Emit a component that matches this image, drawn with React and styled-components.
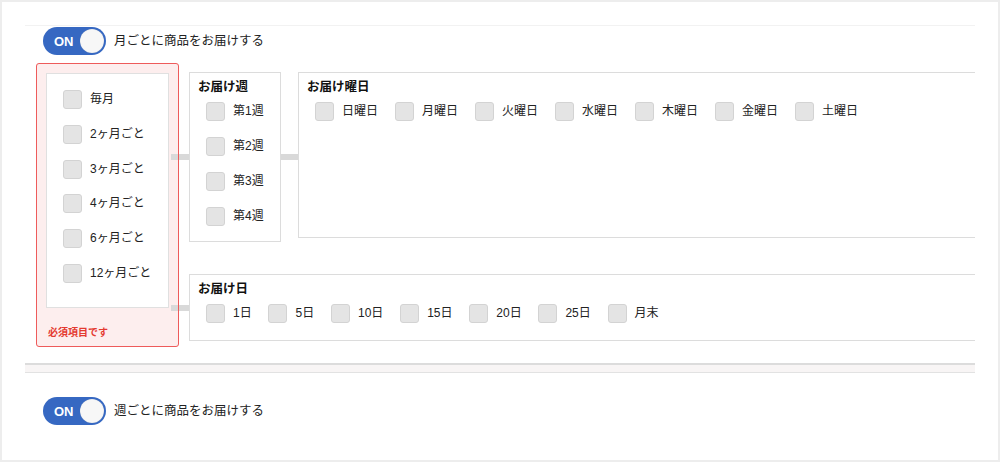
import React from 'react';
import styled, { createGlobalStyle } from 'styled-components';

const FONT = `'Liberation Sans', 'Noto Sans CJK JP', sans-serif`;

const MONTH_OPTIONS = ['毎月', '2ヶ月ごと', '3ヶ月ごと', '4ヶ月ごと', '6ヶ月ごと', '12ヶ月ごと'];
const WEEK_OPTIONS = ['第1週', '第2週', '第3週', '第4週'];
const WEEKDAY_OPTIONS = ['日曜日', '月曜日', '火曜日', '水曜日', '木曜日', '金曜日', '土曜日'];
const DAY_OPTIONS = ['1日', '5日', '10日', '15日', '20日', '25日', '月末'];

const GlobalStyle = createGlobalStyle`
  html, body {
    margin: 0;
    padding: 0;
    background: #ededed;
  }
  body {
    font-family: ${FONT};
    color: #222;
  }
`;

const Card = styled.div`
  margin: 2px;
  height: 458px;
  background: #fff;
  padding: 23px 23px 0;
  box-sizing: border-box;
`;

const Content = styled.div`
  width: 950px;
  overflow: hidden;
`;

const Section = styled.div`
  border-top: 1px solid #f2f2f2;
`;

const ToggleRow = styled.div`
  display: flex;
  align-items: center;
  padding-left: 18px;
  margin-top: ${(p) => p.$top || 0}px;
`;

const Toggle = styled.div`
  width: 63px;
  height: 28px;
  border-radius: 14px;
  background: #3668c2;
  display: flex;
  align-items: center;
  justify-content: space-between;
  padding: 0 2px 0 11px;
  box-sizing: border-box;
`;

const ToggleText = styled.span`
  color: #fff;
  font: bold 13px/1 ${FONT};
`;

const Knob = styled.span`
  width: 24px;
  height: 24px;
  border-radius: 50%;
  background: #f7f7f7;
  box-shadow: inset 0 0 1px rgba(0, 0, 0, 0.2);
`;

const ToggleLabel = styled.span`
  margin-left: 8px;
  font-size: 12.5px;
  line-height: 16px;
  color: #222;
`;

const Options = styled.div`
  display: flex;
  align-items: flex-start;
  margin-top: 8px;
  padding-left: 11px;
`;

const RequiredBox = styled.div`
  position: relative;
  flex: none;
  width: 143px;
  padding: 10px 10px 7px;
  box-sizing: border-box;
  background: #fdeeee;
  border-radius: 3px;

  &::after {
    content: '';
    position: absolute;
    inset: 0;
    border: 1px solid #ee5b5b;
    border-radius: 3px;
    z-index: 2;
    pointer-events: none;
  }
`;

const MonthList = styled.div`
  height: 235px;
  box-sizing: border-box;
  background: #fff;
  border: 1px solid #e0e0e0;
  padding: 16px 0 0 16px;
  display: flex;
  flex-direction: column;
  gap: 15.8px;
`;

const ErrorText = styled.div`
  margin-top: 18px;
  padding-left: 2px;
  font: bold 10px/14px ${FONT};
  color: #e43a30;
`;

const Branches = styled.div`
  flex: 1;
  margin-top: 9px;
  margin-right: -40px;
  display: flex;
  flex-direction: column;
  gap: 32px;
`;

const BranchRow = styled.div`
  display: flex;
  align-items: flex-start;
`;

const Connector = styled.div`
  position: relative;
  z-index: 1;
  flex: none;
  align-self: center;
  width: ${(p) => p.$width}px;
  height: 6px;
  margin-left: ${(p) => p.$offset || 0}px;
  background: #d9d9d9;
`;

const Panel = styled.div`
  flex: ${(p) => (p.$grow ? 1 : 'none')};
  width: ${(p) => (p.$width ? `${p.$width}px` : 'auto')};
  min-height: ${(p) => p.$minHeight || 0}px;
  box-sizing: border-box;
  border: 1px solid #dcdcdc;
  background: #fff;
  padding: 6px 8px ${(p) => p.$bottom || 15}px;
`;

const PanelTitle = styled.div`
  font: bold 12.5px/16px ${FONT};
  color: #111;
  margin-bottom: 7px;
`;

const Choices = styled.div`
  display: flex;
  flex-direction: ${(p) => (p.$column ? 'column' : 'row')};
  gap: ${(p) => p.$gap}px;
  padding-left: 8px;
`;

const Choice = styled.label`
  display: flex;
  align-items: center;
  white-space: nowrap;
`;

const Box = styled.span`
  flex: none;
  width: 19px;
  height: 19px;
  box-sizing: border-box;
  border: 1px solid #d3d3d3;
  border-radius: 3px;
  background: #e4e4e4;
  margin-right: 8px;
`;

const ChoiceText = styled.span`
  font-size: 12px;
  line-height: 19px;
  color: #222;
`;

const Divider = styled.div`
  margin-top: 16px;
  height: 10px;
  box-sizing: border-box;
  border-top: 2px solid #dcdcdc;
  border-bottom: 1px solid #e2e2e2;
  background: #f8f5f5;
`;

function Option({ label }) {
  return (
    <Choice>
      <Box />
      <ChoiceText>{label}</ChoiceText>
    </Choice>
  );
}

function DeliveryToggle({ label, top }) {
  return (
    <ToggleRow $top={top}>
      <Toggle>
        <ToggleText>ON</ToggleText>
        <Knob />
      </Toggle>
      <ToggleLabel>{label}</ToggleLabel>
    </ToggleRow>
  );
}

export default function App() {
  return (
    <>
      <GlobalStyle />
      <Card>
        <Content>
          <Section>
            <DeliveryToggle label="月ごとに商品をお届けする" top={1} />

            <Options>
              <RequiredBox>
                <MonthList>
                  {MONTH_OPTIONS.map((m) => (
                    <Option key={m} label={m} />
                  ))}
                </MonthList>
                <ErrorText>必須項目です</ErrorText>
              </RequiredBox>

              <Branches>
                <BranchRow>
                  <Connector $width={18} $offset={-8} />
                  <Panel $width={92}>
                    <PanelTitle>お届け週</PanelTitle>
                    <Choices $column $gap={16}>
                      {WEEK_OPTIONS.map((w) => (
                        <Option key={w} label={w} />
                      ))}
                    </Choices>
                  </Panel>
                  <Connector $width={17} />
                  <Panel $grow $minHeight={166}>
                    <PanelTitle>お届け曜日</PanelTitle>
                    <Choices $gap={17}>
                      {WEEKDAY_OPTIONS.map((d) => (
                        <Option key={d} label={d} />
                      ))}
                    </Choices>
                  </Panel>
                </BranchRow>

                <BranchRow>
                  <Connector $width={18} $offset={-8} />
                  <Panel $grow $bottom={17}>
                    <PanelTitle>お届け日</PanelTitle>
                    <Choices $gap={16.8}>
                      {DAY_OPTIONS.map((d) => (
                        <Option key={d} label={d} />
                      ))}
                    </Choices>
                  </Panel>
                </BranchRow>
              </Branches>
            </Options>

            <Divider />
          </Section>

          <DeliveryToggle label="週ごとに商品をお届けする" top={24} />
        </Content>
      </Card>
    </>
  );
}
